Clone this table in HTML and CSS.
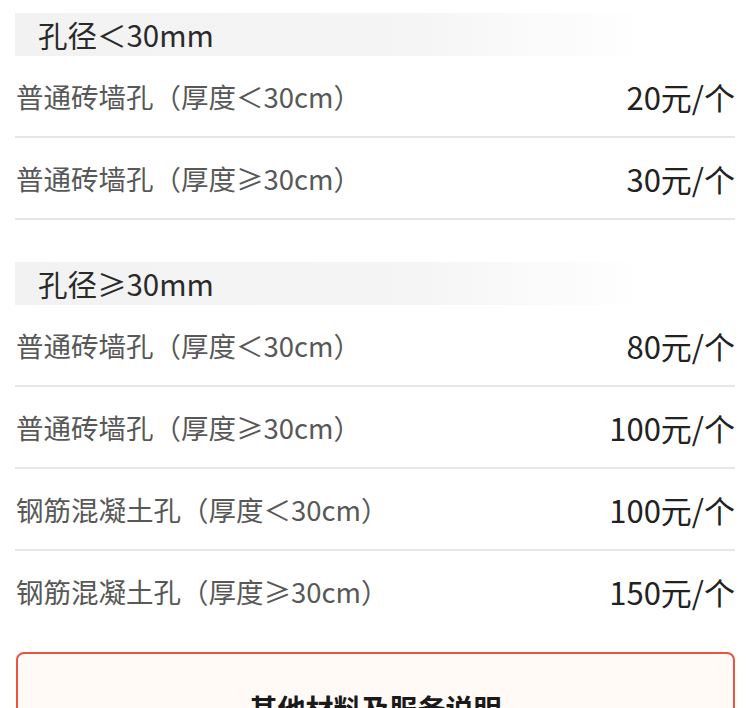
FILE: index.html
```html
<!DOCTYPE html>
<html lang="zh">
<head>
<meta charset="utf-8">
<link rel="stylesheet" href="styles.css">
</head>
<body>
<div class="page">
  <section class="group">
    <div class="group-header">孔径＜30mm</div>
    <div class="row"><span class="name">普通砖墙孔（厚度＜30cm）</span><span class="price">20元/个</span></div>
    <div class="row"><span class="name">普通砖墙孔（厚度≥30cm）</span><span class="price">30元/个</span></div>
  </section>
  <section class="group group-second">
    <div class="group-header">孔径≥30mm</div>
    <div class="row"><span class="name">普通砖墙孔（厚度＜30cm）</span><span class="price">80元/个</span></div>
    <div class="row"><span class="name">普通砖墙孔（厚度≥30cm）</span><span class="price">100元/个</span></div>
    <div class="row"><span class="name">钢筋混凝土孔（厚度＜30cm）</span><span class="price">100元/个</span></div>
    <div class="row row-last"><span class="name">钢筋混凝土孔（厚度≥30cm）</span><span class="price">150元/个</span></div>
  </section>
  <section class="notice">
    <h2 class="notice-title">其他材料及服务说明</h2>
  </section>
</div>
</body>
</html>
```
FILE: styles.css
```css
html, body {
  margin: 0;
  padding: 0;
  background: #fff;
}
body {
  font-family: "Noto Sans CJK SC", "Noto Sans", sans-serif;
  width: 750px;
  height: 708px;
  overflow: hidden;
}
.page {
  padding: 13px 15px 0 15px;
}
.group-header {
  height: 43px;
  line-height: 43px;
  padding-left: 23px;
  font-size: 29.5px;
  color: #2a2a2a;
  background: linear-gradient(to right, #f2f2f2 0%, #f5f5f5 55%, #ffffff 88%);
}
.row {
  display: flex;
  justify-content: space-between;
  align-items: center;
  height: 80px;
  border-bottom: 2px solid #e6e6e6;
}
.row-last {
  border-bottom: none;
}
.name {
  font-size: 27.5px;
  color: #585858;
  padding-left: 1px;
}
.price {
  font-size: 31px;
  color: #222;
}
.group-second {
  margin-top: 42px;
}
.notice {
  margin-top: 21px;
  margin-left: 1px;
  border: 2px solid #e9553f;
  border-radius: 8px;
  background: #fffaf5;
  height: 120px;
}
.notice-title {
  margin: 34px 0 0 0;
  text-align: center;
  font-size: 28px;
  font-weight: bold;
  color: #1a1a1a;
}
```
